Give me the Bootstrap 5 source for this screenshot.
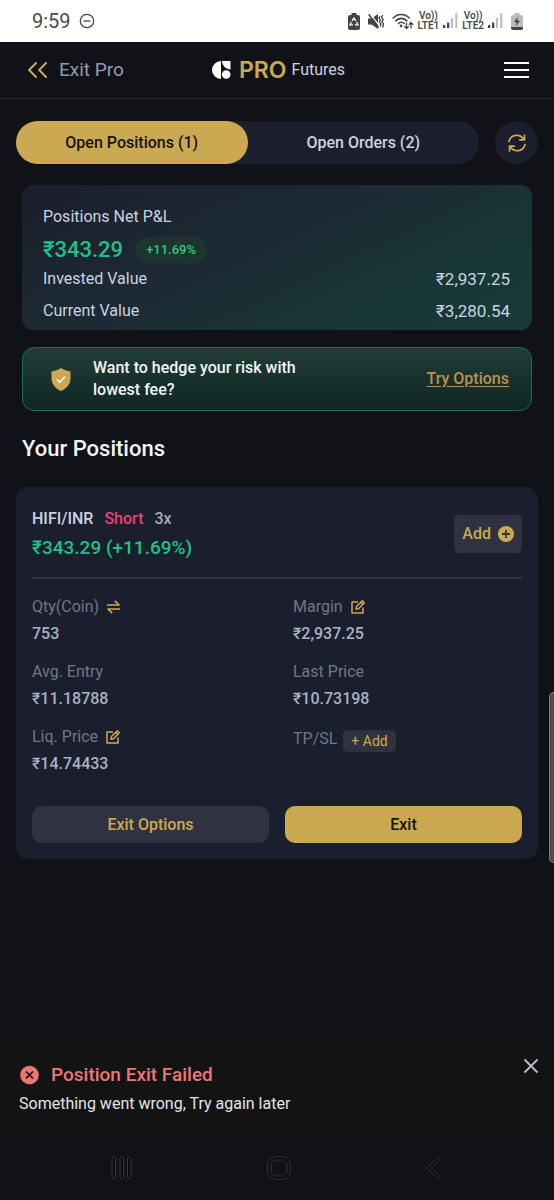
<!DOCTYPE html>
<html lang="en">
<head>
<meta charset="utf-8">
<meta name="viewport" content="width=device-width, initial-scale=1">
<title>PRO Futures – Open Positions</title>
<link href="https://cdn.jsdelivr.net/npm/bootstrap@5.3.0/dist/css/bootstrap.min.css" rel="stylesheet">
<style>
  :root { --gold: #cba953; --panel: #1b1e2c; --soft: #30333f; --green: #1fc284; }
  body { background: #111217; color: #cbd3e2; font: 16px/24px Roboto, sans-serif; }
  svg { display: block; flex: none; }
  button, .btn { font-family: inherit; }
  .status-bar { background: #fff; color: #4a4a4a; height: 42px; padding: 0 31px 0 32px; }
  .clock { font-size: 20px; }
  .volte { font-size: 10px; line-height: 10px; font-weight: 600; text-align: center; }
  .app-bar { height: 57px; padding: 0 25px 0 28px; border-bottom: 1px solid #262a36; display: grid; grid-template-columns: 1fr auto 1fr; align-items: center; }
  .exit-link { color: #939bb0; font-size: 19px; gap: 12px; }
  .brand-word { font: 600 23px/24px Inter, sans-serif; color: var(--gold); margin: 0 5px 0 8px; }
  .plain { background: none; border: 0; padding: 0; color: inherit; }
  .content { padding: 22px 16px 0; }
  .inset { margin-left: 6px; margin-right: 6px; }
  .tabs { background: var(--panel); height: 43px; }
  .tabs button { border: 0; border-radius: 22px; background: none; color: #cbd3e2; font-weight: 500; flex: 1 1 0; }
  .tabs button.active { background: var(--gold); color: #15130d; }
  .refresh { width: 43px; height: 43px; background: var(--panel); border: 0; }
  .pnl { border-radius: 11px; margin-top: 21px; padding: 20px 22px 7px 21px; background: linear-gradient(155deg, #1c1e2c 0%, #1c2a33 42%, #173a36 88%); }
  .pnl-total { font-size: 22px; font-weight: 500; color: var(--green); }
  .pnl-chip { font-size: 13px; line-height: 26px; font-weight: 500; color: #2ccb83; background: #1e352e; padding: 0 11px; }
  .amount { font-size: 17px; }
  .hedge { border: 1px solid #1c6b52; border-radius: 12px; margin-top: 17px; padding: 9px 22px 9px 28px; background: linear-gradient(#213c38, #102724); }
  .hedge-text { color: #f3f6f7; font-weight: 500; line-height: 22px; max-width: 230px; margin-left: 22px; }
  .gold-link { color: #b8934b; font-weight: 500; text-underline-offset: 2px; }
  h1 { font-size: 22px; line-height: 28px; font-weight: 500; color: #f4f5f7; }
  .position { background: var(--panel); border-radius: 12px; padding: 20px 16px 16px; }
  .pair { gap: 11px; font-weight: 500; }
  .pos-pnl { color: var(--green); font-size: 19px; font-weight: 500; line-height: 26px; margin-top: 4px; }
  .short { color: #ea4370; }
  .leverage { color: #a3abc0; }
  .btn-soft { background: var(--soft); color: var(--gold); border: 0; font-weight: 500; }
  .btn-gold { background: var(--gold); color: #15130d; border: 0; font-weight: 500; }
  .btn-add { border-radius: 5px; height: 38px; padding: 0 8px; gap: 7px; }
  .btn-wide { border-radius: 10px; height: 37px; flex: 1 1 0; }
  .btn-tpsl { font-size: 14px; font-weight: 400; line-height: 22px; border-radius: 5px; padding: 0 8px; }
  .rule { border-top: 2px solid #2b3543; margin: 16px 0 15px; }
  .figures { --bs-gutter-x: 32px; row-gap: 12px; margin-bottom: 29px; }
  .figures dt { color: #6f778d; font-weight: 400; line-height: 26px; gap: 8px; }
  .figures dd { color: #aab2c8; font-weight: 500; line-height: 27px; margin: 0; }
  .tpsl { padding-top: 2px; gap: 6px; }
  .scroll-thumb { position: absolute; right: 0; top: 692px; width: 5px; height: 171px; background: #4d4e53; border: 1px solid #77787c; border-right: 0; border-radius: 5px 0 0 5px; }
  .notice { background: #131313; padding: 16px 15px 19px 19px; }
  .notice-title { color: #ee7672; font-size: 19px; font-weight: 500; gap: 12px; line-height: 26px; margin-top: 4px; }
  .notice-text { color: #e3e5e9; line-height: 24px; margin-top: 4px; }
  .system-nav { height: 65px; padding: 0 111px; }
</style>
</head>
<body class="position-relative min-vh-100 d-flex flex-column">

<div class="status-bar d-flex align-items-center justify-content-between">
  <div class="d-flex align-items-center gap-2">
    <span class="clock">9:59</span>
    <svg width="16" height="16" viewBox="0 0 16 16" fill="none" stroke="#4a4a4a" stroke-width="1.3"><circle cx="8" cy="8" r="6.7"/><path d="M4.6 8h6.8"/></svg>
  </div>
  <div class="d-flex align-items-center">
    <svg class="me-2" width="12" height="17" viewBox="0 0 12 17"><path fill="#444" d="M3.500 0h5v2H10a2 2 0 0 1 2 2v11a2 2 0 0 1-2 2H2a2 2 0 0 1-2-2V4a2 2 0 0 1 2-2h1.500z"/><path d="M4 7.800 6 5l2 2.800M8.600 9 10 11.800H7M5 11.800H2L3.400 9" fill="none" stroke="#fff" stroke-width="1.300"/></svg>
    <svg class="me-2" width="16" height="17" viewBox="0 0 16 17"><path fill="#444" d="M0 5.500h3.500L10 1v15l-6.500-4.500H0z"/><path d="M2.400 1.200 12 13.500" stroke="#fff" stroke-width="1.200"/><path d="M.6 1.200 10.500 14.600" stroke="#444" stroke-width="1.500"/><path d="M12 3l-1 2 1.500 2L11.500 9l1.500 2-1 2.500M14.600 2l-1 2.500 1.500 2-1 2.500 1.500 2-1 3.500" fill="none" stroke="#444" stroke-width="1.300"/></svg>
    <svg class="me-1" width="22" height="17" viewBox="0 0 22 17" fill="none" stroke="#444" stroke-width="1.600"><path d="M.8 5.500C5.500.2 13 .2 17.700 5.500M3.300 8.200c3.500-3.800 8.600-3.800 12 0M6 10.900c2-2.200 4.600-2.200 6.500 0"/><circle cx="9" cy="13" r="1.400" fill="#444" stroke="none"/><path d="M14.500 9.500v6M12.300 13.300l2.200 2.300 2.200-2.300M19 15.500v-6M16.900 11.700 19 9.400l2.200 2.300" stroke-width="1.300"/></svg>
    <span class="volte">Vo))<br>LTE1</span>
    <svg class="mx-1" width="15" height="16" viewBox="0 0 15 16"><path d="M0 12h2.300v3H0zM4 9.500h2.300V15H4z" fill="#444"/><path d="M8 5h2v10H8zM12.300 0h2v15h-2z" fill="#bbb"/></svg>
    <span class="volte">Vo))<br>LTE2</span>
    <svg class="mx-1" width="15" height="16" viewBox="0 0 15 16"><path d="M0 12h2.300v3H0zM4 9.500h2.300V15H4z" fill="#444"/><path d="M8 5h2v10H8zM12.300 0h2v15h-2z" fill="#bbb"/></svg>
    <svg class="ms-1" width="12" height="17" viewBox="0 0 12 17"><path fill="#bbb" d="M3.500 0h5v2H10a2 2 0 0 1 2 2v11a2 2 0 0 1-2 2H2a2 2 0 0 1-2-2V4a2 2 0 0 1 2-2h1.500z"/><path fill="#444" d="M0 14h12v1a2 2 0 0 1-2 2H2a2 2 0 0 1-2-2zM6.800 4 3 9h2.500L5 13l4-5.200H6.400z"/></svg>
  </div>
</div>

<header class="app-bar">
  <a href="#" class="exit-link d-flex align-items-center text-decoration-none">
    <svg width="19" height="16" viewBox="0 0 19 16" fill="none" stroke="#cba953" stroke-width="2" stroke-linecap="round"><path d="M8 1 1.200 8 8 15M18 1l-6.800 7L18 15"/></svg>
    Exit Pro
  </a>
  <div class="d-flex align-items-center">
    <svg width="19" height="18" viewBox="0 0 19 18" fill="#fff"><path d="M9 0v18A9 9 0 0 1 9 0zM10 0h8.500v8.500A8.500 8.500 0 0 1 10 0z"/><circle cx="14.200" cy="13.500" r="4.300"/></svg>
    <span class="brand-word">PRO</span>
    <span>Futures</span>
  </div>
  <button class="plain ms-auto" aria-label="Menu">
    <svg width="25" height="18" viewBox="0 0 25 18" fill="none" stroke="#fff" stroke-width="2"><path d="M0 2h25M0 9h25M0 16h25"/></svg>
  </button>
</header>

<main class="content flex-grow-1">
  <div class="d-flex gap-3">
    <div class="tabs d-flex flex-grow-1 rounded-pill" role="tablist">
      <button class="active" role="tab" aria-selected="true">Open Positions (1)</button>
      <button role="tab" aria-selected="false">Open Orders (2)</button>
    </div>
    <button class="refresh rounded-circle d-flex align-items-center justify-content-center p-0" aria-label="Refresh">
      <svg width="18" height="18" viewBox="0 0 18 18" fill="none" stroke="#cba953" stroke-width="1.700" stroke-linecap="round" stroke-linejoin="round"><path d="M1 7.500C2.500.8 11.500-1.200 15.800 5.200M16.500 1v4.800h-4.800M17 10.500c-1.500 6.700-10.500 8.700-14.800 2.300M1.500 17v-4.800h4.800"/></svg>
    </button>
  </div>

  <section class="pnl inset">
    <div>Positions Net P&amp;L</div>
    <div class="d-flex align-items-center mt-2 mb-1">
      <span class="pnl-total me-2">₹343.29</span>
      <span class="pnl-chip rounded-pill ms-1">+11.69%</span>
    </div>
    <div class="d-flex justify-content-between"><span>Invested Value</span><span class="amount">₹2,937.25</span></div>
    <div class="d-flex justify-content-between mt-2"><span>Current Value</span><span class="amount">₹3,280.54</span></div>
  </section>

  <section class="hedge inset d-flex align-items-center">
    <svg width="20" height="23" viewBox="0 0 20 23"><path fill="#cba953" d="M10 0c2.800 2 6 3 9.500 3.200V10c0 6-3.500 10.500-9.500 13C4 20.500.5 16 .5 10V3.200C4 3 7.200 2 10 0z"/><path d="m6 11.500 2.800 2.700L14 8.800" fill="none" stroke="#fff" stroke-width="1.600"/></svg>
    <div class="hedge-text">Want to hedge your risk with lowest fee?</div>
    <a href="#" class="gold-link ms-auto">Try Options</a>
  </section>

  <h1 class="inset mt-4 mb-4">Your Positions</h1>

  <article class="position">
    <div class="d-flex align-items-center justify-content-between">
      <div>
        <div class="d-flex pair"><span>HIFI/INR</span><span class="short">Short</span><span class="leverage">3x</span></div>
        <div class="pos-pnl">₹343.29 (+11.69%)</div>
      </div>
      <button class="btn btn-soft btn-add d-flex align-items-center">Add
        <svg width="16" height="16" viewBox="0 0 16 16"><circle cx="8" cy="8" r="8" fill="#cba953"/><path d="M8 4v8M4 8h8" stroke="#30333f" stroke-width="1.800"/></svg>
      </button>
    </div>
    <div class="rule"></div>
    <dl class="row figures">
      <div class="col-6">
        <dt class="d-flex align-items-center">Qty(Coin)
          <svg width="13" height="14" viewBox="0 0 13 14" fill="none" stroke="#cba953" stroke-width="1.700" stroke-linejoin="round"><path d="M0 5h12L7.800.8M13 9H1l4.200 4.200"/></svg>
        </dt><dd>753</dd>
      </div>
      <div class="col-6">
        <dt class="d-flex align-items-center">Margin
          <svg width="14" height="14" viewBox="0 0 14 14" fill="none" stroke="#cba953" stroke-width="1.500" stroke-linejoin="round"><path d="M7 2H1v11h11V7.500M5 9.200l.5-2.700L11.300.8l2 2L7.600 8.700zM9.700 2.400l2 2"/></svg>
        </dt><dd>₹2,937.25</dd>
      </div>
      <div class="col-6"><dt>Avg. Entry</dt><dd>₹11.18788</dd></div>
      <div class="col-6"><dt>Last Price</dt><dd>₹10.73198</dd></div>
      <div class="col-6">
        <dt class="d-flex align-items-center">Liq. Price
          <svg width="14" height="14" viewBox="0 0 14 14" fill="none" stroke="#cba953" stroke-width="1.500" stroke-linejoin="round"><path d="M7 2H1v11h11V7.500M5 9.200l.5-2.700L11.300.8l2 2L7.600 8.700zM9.700 2.400l2 2"/></svg>
        </dt><dd>₹14.74433</dd>
      </div>
      <div class="col-6 d-flex align-items-start tpsl">
        <dt>TP/SL</dt><dd><button class="btn btn-soft btn-tpsl">+ Add</button></dd>
      </div>
    </dl>
    <div class="d-flex gap-3">
      <button class="btn btn-soft btn-wide py-0">Exit Options</button>
      <button class="btn btn-gold btn-wide py-0">Exit</button>
    </div>
  </article>
</main>

<div class="scroll-thumb"></div>

<div class="notice d-flex justify-content-between align-items-start" role="alert">
  <div>
    <div class="notice-title d-flex align-items-center">
      <svg width="20" height="20" viewBox="0 0 20 20"><circle cx="10.500" cy="10" r="9.300" fill="#ee7672"/><path d="m7 6.500 7 7m0-7-7 7" stroke="#131313" stroke-width="1.700"/></svg>
      Position Exit Failed
    </div>
    <div class="notice-text">Something went wrong, Try again later</div>
  </div>
  <button class="plain" aria-label="Close">
    <svg width="16" height="16" viewBox="0 0 16 16" fill="none" stroke="#b9c1d3" stroke-width="1.800"><path d="m1.500 1.500 13 13m0-13-13 13"/></svg>
  </button>
</div>

<nav class="system-nav d-flex align-items-center justify-content-between" aria-label="System">
  <button class="plain" aria-label="Recents"><svg width="22" height="24" viewBox="0 0 22 24" fill="#0b0c10" stroke="#34363b"><rect x="1" y="1" width="3.500" height="21.500" rx="1.700"/><rect x="9" y="1" width="3.500" height="21.500" rx="1.700"/><rect x="16.500" y="1" width="3.500" height="21.500" rx="1.700"/></svg></button>
  <button class="plain" aria-label="Home"><svg width="24" height="24" viewBox="0 0 24 24" fill="#0b0c10" stroke="#34363b"><rect x=".8" y=".8" width="22.400" height="22.400" rx="7.500"/><rect x="4" y="4" width="16" height="16" rx="4.500" fill="#111217"/></svg></button>
  <button class="plain" aria-label="Back"><svg width="18" height="24" viewBox="0 0 18 24"><path d="m13 1.500 1.800 1.800L6 12l8.800 8.700L13 22.500 1.500 12z" fill="#0b0c10" stroke="#34363b" stroke-linejoin="round"/></svg></button>
</nav>

<script src="https://cdn.jsdelivr.net/npm/bootstrap@5.3.0/dist/js/bootstrap.bundle.min.js"></script>
</body>
</html>
